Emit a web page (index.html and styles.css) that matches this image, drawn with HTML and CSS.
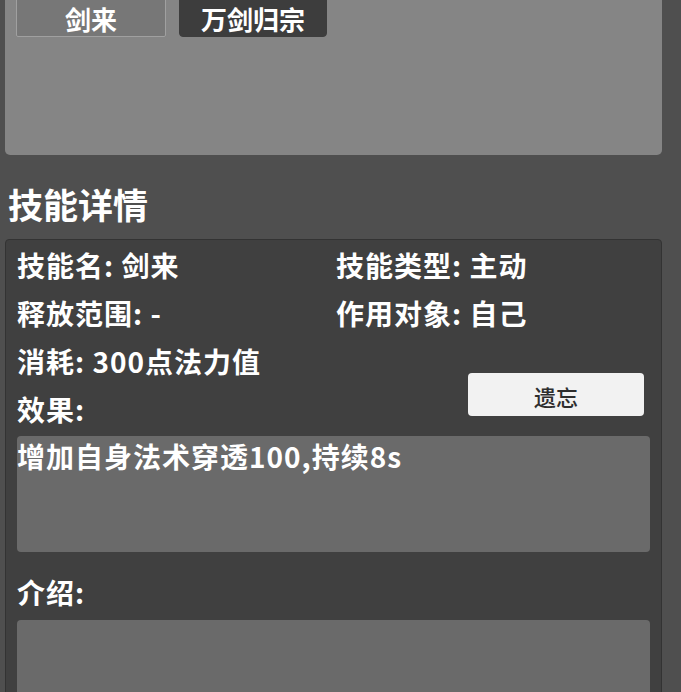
FILE: index.html
```html
<!DOCTYPE html>
<html>
<head>
    <meta charset="utf-8">
    <link rel="stylesheet" href="styles.css">
</head>
<body>
    <div class="skill-list">
        <div class="skill-tabs">
            <button class="skill-tab">剑来</button>
            <button class="skill-tab selected">万剑归宗</button>
        </div>
    </div>

    <h2 class="section-title">技能详情</h2>

    <div class="skill-detail">
        <div class="detail-grid">
            <div class="detail-row">技能名: 剑来</div>
            <div class="detail-row">技能类型: 主动</div>
            <div class="detail-row">释放范围: -</div>
            <div class="detail-row">作用对象: 自己</div>
            <div class="detail-row">消耗: 300点法力值</div>
            <button class="forget-button">遗忘</button>
            <div class="detail-row effect-label">效果:</div>
        </div>
        <div class="text-box effect-box">增加自身法术穿透100,持续8s</div>
        <div class="detail-row intro-label">介绍:</div>
        <div class="text-box intro-box"></div>
    </div>
</body>
</html>
```

FILE: styles.css
```css
body {
    margin: 0;
    background: #4f4f4f;
    color: #fff;
    font-family: "Noto Sans CJK SC", "Noto Sans", sans-serif;
    font-weight: bold;
    height: 692px;
    overflow: hidden;
}
.skill-list {
    margin: 0 19px 0 5px;
    height: 155px;
    background: #858585;
    border-radius: 0 0 5px 5px;
    padding: 0 11px;
}
.skill-tabs {
    display: flex;
    gap: 13px;
    position: relative;
    top: -6px;
}
.skill-tab {
    width: 150px;
    height: 43px;
    font-family: inherit;
    font-weight: bold;
    font-size: 26px;
    line-height: 43px;
    padding: 0;
    padding-top: 2px;
    color: #fff;
    background: #777;
    border: 1px solid #a0a0a0;
    border-radius: 2px;
}
.skill-tab.selected {
    width: 148px;
    background: #3d3d3d;
    border-color: #3d3d3d;
    border-radius: 4px;
}
.section-title {
    margin: 25px 0 11px 8px;
    font-size: 35px;
    line-height: 48px;
    font-weight: bold;
}
.skill-detail {
    margin-left: 5px;
    width: 657px;
    height: 470px;
    background: #404040;
    border: 1px solid #333;
    border-radius: 4px;
    padding: 1px 11px 0;
    box-sizing: border-box;
}
.detail-grid {
    display: grid;
    grid-template-columns: 319px 1fr;
}
.detail-row {
    font-size: 28px;
    line-height: 48px;
    letter-spacing: 1px;
    white-space: nowrap;
}
.forget-button {
    grid-column: 2;
    grid-row: 3 / span 2;
    justify-self: end;
    align-self: end;
    margin: 0 6px 17px 0;
    width: 176px;
    height: 43px;
    background: #f2f2f2;
    color: #2e2e2e;
    border: none;
    border-radius: 4px;
    font-family: inherit;
    font-weight: 500;
    font-size: 22px;
    padding-top: 4px;
}
.effect-label {
    grid-column: 1;
    grid-row: 4;
}
.text-box {
    background: #6a6a6a;
    border-radius: 4px;
    font-size: 28px;
    line-height: 40px;
    letter-spacing: 1px;
}
.effect-box {
    margin-top: 3px;
    height: 116px;
}
.intro-label {
    margin: 16px 0 4px;
}
.intro-box {
    height: 100px;
}
```
